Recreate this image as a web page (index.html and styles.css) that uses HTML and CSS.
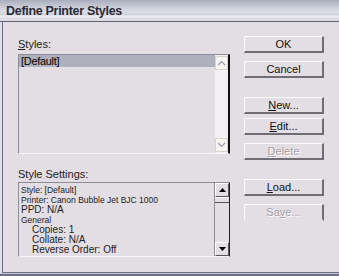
FILE: index.html
```html
<!DOCTYPE html>
<html>
<head>
<meta charset="utf-8">
<link rel="stylesheet" href="styles.css">
</head>
<body>
<div class="window">
  <div class="titlebar">Define Printer Styles</div>
  <div class="body">
    <div class="left">
      <div class="label"><u>S</u>tyles:</div>
      <div class="listbox">
        <div class="list-items">
          <div class="item selected">[Default]</div>
        </div>
        <div class="lscroll">
          <div class="lbtn"><svg width="9" height="6" viewBox="0 0 9 6"><path d="M1 5 L4.5 1.5 L8 5" fill="none" stroke="#9a9aa8" stroke-width="1.2"/></svg></div>
          <div class="ltrack"></div>
          <div class="lbtn"><svg width="9" height="6" viewBox="0 0 9 6"><path d="M1 1 L4.5 4.5 L8 1" fill="none" stroke="#9a9aa8" stroke-width="1.2"/></svg></div>
        </div>
      </div>
      <div class="label label-settings">Style Settings:</div>
      <div class="settings">
        <div class="settings-text">
          <div class="line">Style: [Default]</div>
          <div class="line">Printer: Canon Bubble Jet BJC 1000</div>
          <div class="line big">PPD: N/A</div>
          <div class="line">General</div>
          <div class="line big indent">Copies: 1</div>
          <div class="line big indent">Collate: N/A</div>
          <div class="line big indent">Reverse Order: Off</div>
        </div>
        <div class="sscroll">
          <div class="sbtn"><svg width="7" height="4" viewBox="0 0 7 4"><path d="M0 4 L3.5 0 L7 4 Z" fill="#000"/></svg></div>
          <div class="sthumb"></div>
          <div class="strack"></div>
          <div class="sbtn"><svg width="7" height="4" viewBox="0 0 7 4"><path d="M0 0 L3.5 4 L7 0 Z" fill="#000"/></svg></div>
        </div>
      </div>
    </div>
    <div class="buttons">
      <div class="btn">OK</div>
      <div class="btn gap8">Cancel</div>
      <div class="btn gap19"><u>N</u>ew...</div>
      <div class="btn gap4"><u>E</u>dit...</div>
      <div class="btn gap8 disabled"><u>D</u>elete</div>
      <div class="btn gap19"><u>L</u>oad...</div>
      <div class="btn gap8 disabled flat">Sa<u>v</u>e...</div>
    </div>
  </div>
  <div class="bottomframe"></div>
</div>
</body>
</html>
```

FILE: styles.css
```css
html, body {
  margin: 0;
  padding: 0;
  background: #e3dee3;
}
.window {
  width: 339px;
  height: 276px;
  display: flex;
  flex-direction: column;
  background: #e3dee3;
  font-family: "Liberation Sans", Arial, sans-serif;
  color: #000;
  overflow: hidden;
}
.titlebar {
  height: 22px;
  box-sizing: border-box;
  border-bottom: 1px solid #626479;
  background: linear-gradient(#a8acbd 0, #bcc0cd 4px, #d2d4de 9px, #dcdee6 12px, #cdd0da 15px, #f4f4f7 16px, #e6e4ea 17px, #dad7de 21px);
  font-size: 12.5px;
  font-weight: bold;
  line-height: 21px;
  padding-left: 6px;
  padding-top: 1px;
  color: #2a2a34;
  letter-spacing: -0.3px;
}
.body {
  flex: 1;
  display: flex;
  margin-left: 2px;
  border-left: 1px solid #6d6f87;
  border-bottom: 1px solid #6d6f87;
  padding-left: 15px;
}
.left {
  width: 212px;
  display: flex;
  flex-direction: column;
  padding-top: 16px;
}
.label {
  font-size: 11px;
  line-height: 12px;
  height: 12px;
  margin-bottom: 4px;
  color: #222;
}
.label-settings {
  margin-top: 14px;
  margin-bottom: 2px;
}
.listbox {
  height: 100px;
  box-sizing: border-box;
  display: flex;
  border-top: 1px solid #8e8c94;
  border-left: 1px solid #8e8c94;
  border-bottom: 1px solid #f6f4f6;
  border-right: 2px solid #111;
}
.list-items {
  flex: 1;
}
.item {
  font-size: 11px;
  line-height: 12px;
  height: 12px;
  padding-left: 2px;
  letter-spacing: -0.3px;
}
.item.selected {
  background: #aeb0be;
}
.lscroll {
  width: 13px;
  display: flex;
  flex-direction: column;
  background: #f2f0f2;
}
.lbtn {
  height: 12px;
  margin: 1px 0;
  border: 1px solid #d6d4c4;
  display: flex;
  align-items: center;
  justify-content: center;
  background: #f6f5f2;
}
.ltrack {
  flex: 1;
}
.settings {
  height: 75px;
  box-sizing: border-box;
  display: flex;
  border-top: 1px solid #8e8c94;
  border-left: 1px solid #8e8c94;
  border-bottom: 1px solid #f6f4f6;
  border-right: 1px solid #222;
  overflow: hidden;
}
.settings-text {
  flex: 1;
  padding-left: 2px;
  padding-top: 2px;
  font-size: 8.5px;
  color: #222;
  overflow: hidden;
}
.line {
  line-height: 10px;
  height: 10px;
  white-space: nowrap;
}
.line.big {
  font-size: 10px;
}
.line.indent {
  padding-left: 11px;
}
.sscroll {
  width: 14px;
  display: flex;
  flex-direction: column;
  border-left: 1px solid #8e8c94;
}
.sbtn {
  height: 14px;
  box-sizing: border-box;
  border-top: 1px solid #fff;
  border-left: 1px solid #fff;
  border-right: 1px solid #555;
  border-bottom: 1px solid #555;
  display: flex;
  align-items: center;
  justify-content: center;
  background: #e3dee3;
}
.sthumb {
  height: 6px;
  box-sizing: border-box;
  border-top: 1px solid #fff;
  border-bottom: 1px solid #555;
}
.strack {
  flex: 1;
}
.buttons {
  margin-left: 14px;
  width: 80px;
  display: flex;
  flex-direction: column;
  padding-top: 14px;
}
.btn {
  height: 17px;
  box-sizing: border-box;
  border-top: 1px solid #fbfbfb;
  border-left: 1px solid #fbfbfb;
  border-right: 2px solid #6f6d74;
  border-bottom: 2px solid #6f6d74;
  font-size: 11px;
  line-height: 14px;
  text-align: center;
  color: #111;
}
.btn.gap8 { margin-top: 8px; }
.btn.gap19 { margin-top: 19px; }
.btn.gap4 { margin-top: 4px; }
.btn.disabled {
  color: #a3a1a8;
  text-shadow: 1px 1px 0 #fff;
}
.btn.flat {
  border-bottom-color: transparent;
}
.bottomframe {
  height: 3px;
  border-top: 1px solid #c9c8d2;
  background: #6d6f87;
  box-sizing: border-box;
}
```
